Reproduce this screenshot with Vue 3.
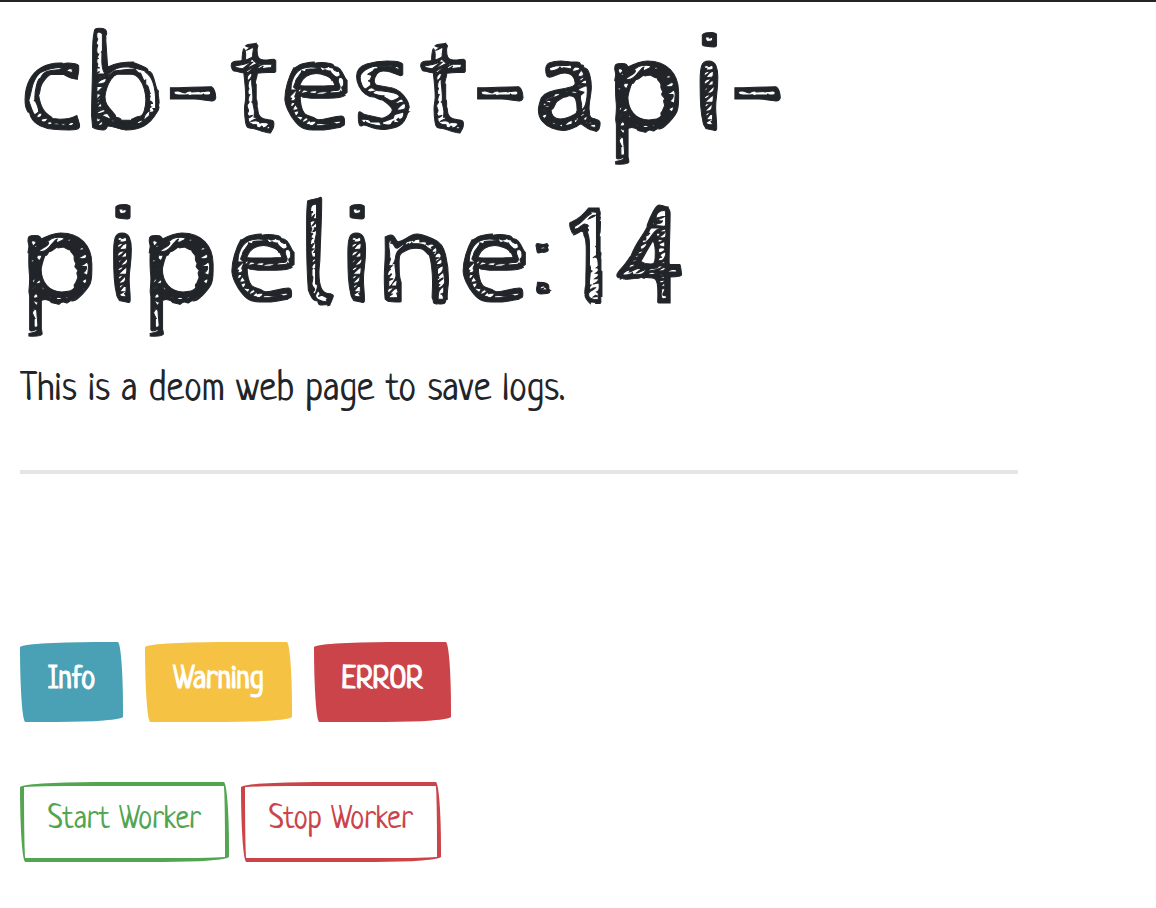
<template>
  <main class="page">
    <section class="jumbotron">
      <h1 class="title">cb-test-api-pipeline:14</h1>
      <p class="lead">This is a deom web page to save logs.</p>
      <hr class="divider" />
    </section>
    <div class="button-row log-row">
      <button
        v-for="item in logButtons"
        :key="item.type"
        type="button"
        class="btn btn-filled"
        :class="'btn-' + item.type"
      >
        {{ item.label }}
      </button>
    </div>
    <div class="button-row worker-row">
      <button type="button" class="btn btn-outline-success">Start Worker</button>
      <button type="button" class="btn btn-outline-danger">Stop Worker</button>
    </div>
  </main>
</template>

<script setup>
const logButtons = [
  { type: 'info', label: 'Info' },
  { type: 'warning', label: 'Warning' },
  { type: 'danger', label: 'ERROR' }
];
</script>

<style>
body {
  margin: 0;
  background-color: #fff;
}
</style>

<style scoped>
.page {
  box-sizing: border-box;
  padding: 1px 20px 0;
  border-top: 2px solid #252525;
  color: #212529;
  font-family: Neucha, "Open Sans", sans-serif;
}

.jumbotron {
  max-width: 998px;
}

.title {
  margin: 0;
  font-family: "Cabin Sketch", Lato, sans-serif;
  font-size: 144px;
  font-weight: 400;
  line-height: 172px;
  -webkit-text-stroke: 1px;
}

.lead {
  margin: 13px 0 50px;
  font-size: 40px;
  line-height: 60px;
}

.divider {
  margin: 0;
  border: 0;
  border-top: 4px solid #e5e5e5;
}

.button-row {
  display: flex;
  flex-wrap: wrap;
}

.log-row {
  gap: 22px;
  margin-top: 168px;
}

.worker-row {
  gap: 12px;
  margin-top: 60px;
}

.btn {
  box-sizing: border-box;
  padding: 10px 24px 14px;
  border: 4px solid;
  border-radius: 255px 18px 225px 18px / 18px 225px 18px 255px;
  background: transparent;
  font-family: inherit;
  font-size: 32px;
  line-height: 48px;
  cursor: pointer;
}

.btn-filled {
  color: #fff;
  -webkit-text-stroke: 1px;
}

.btn-info {
  border-color: #4aa0b5;
  background-color: #4aa0b5;
}

.btn-warning {
  border-color: #f5c244;
  background-color: #f5c244;
}

.btn-danger {
  border-color: #cb444a;
  background-color: #cb444a;
}

.btn-outline-success {
  border-color: #53a551;
  color: #53a551;
}

.btn-outline-danger {
  border-color: #cb444a;
  color: #cb444a;
}
</style>
